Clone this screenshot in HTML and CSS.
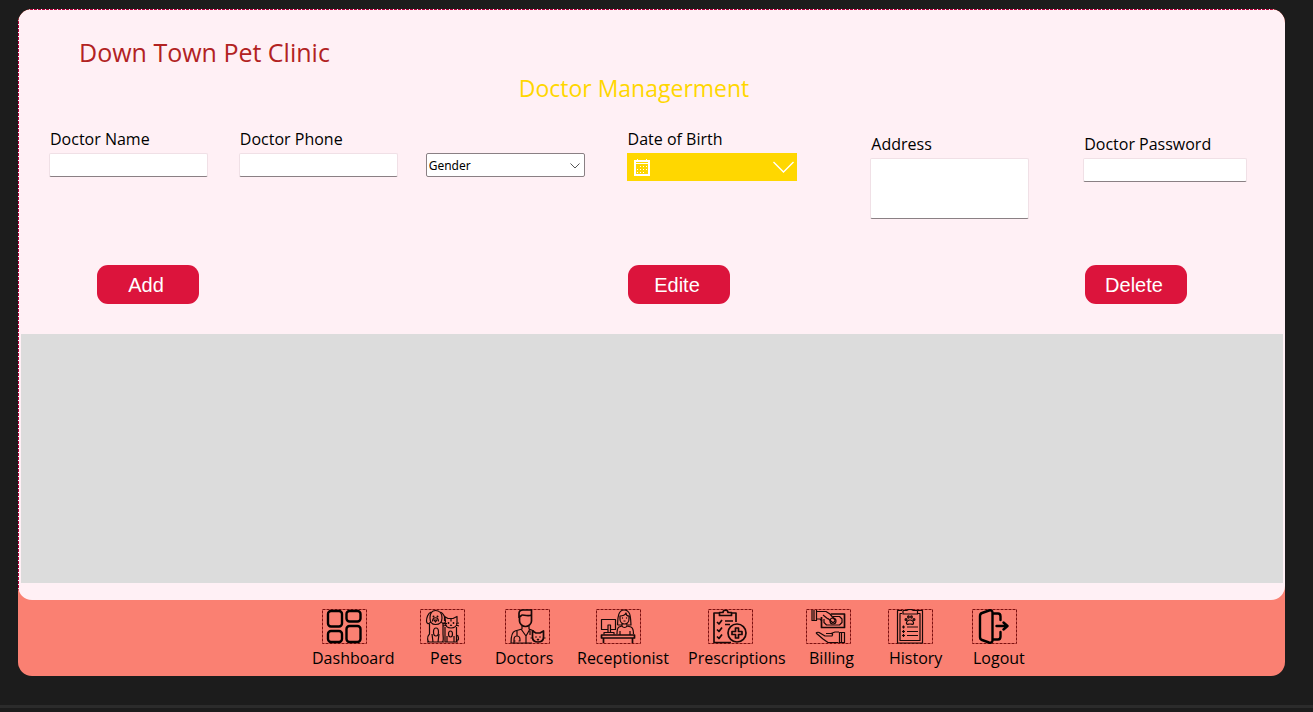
FILE: index.html
```html
<!DOCTYPE html>
<html lang="en">
<head>
<meta charset="utf-8">
<title>Down Town Pet Clinic</title>
<meta name="viewport" content="width=device-width, initial-scale=1">
<link rel="stylesheet" href="styles.css">
</head>
<body>
<div class="window">
  <main class="panel">
    <h1 class="title">Down Town Pet Clinic</h1>
    <h2 class="subtitle">Doctor Managerment</h2>
    <form class="form">
      <div class="fields">
        <div class="field">
          <label for="name">Doctor Name</label>
          <input class="box" id="name" type="text">
        </div>
        <div class="field">
          <label for="phone">Doctor Phone</label>
          <input class="box" id="phone" type="tel">
        </div>
        <div class="field field-bare">
          <div class="select-wrap">
            <select class="select" id="gender" aria-label="Gender">
              <option>Gender</option>
              <option>Male</option>
              <option>Female</option>
            </select>
            <svg class="select-arrow" viewBox="0 0 10 6" aria-hidden="true"><path d="M.5.5 5 5 9.5.5"/></svg>
          </div>
        </div>
        <div class="field">
          <label for="birth">Date of Birth</label>
          <button class="date" id="birth" type="button">
            <svg class="date-icon" viewBox="0 0 16 17" aria-hidden="true">
              <path class="date-frame" d="M1 2h14v14H1z"/>
              <path class="date-bar" d="M1 4.500h14M3.500 0v3M12.500 0v3"/>
              <path class="date-dots" d="M6 7.500h8M3 10.500h10M3 13.500h8"/>
            </svg>
            <svg class="date-arrow" viewBox="0 0 21 12" aria-hidden="true"><path d="M.5 1 10.500 11 20.500 1"/></svg>
          </button>
        </div>
        <div class="field field-low">
          <label for="address">Address</label>
          <textarea class="box box-tall" id="address"></textarea>
        </div>
        <div class="field field-low">
          <label for="password">Doctor Password</label>
          <input class="box box-wide" id="password" type="password">
        </div>
      </div>
      <div class="actions">
        <button class="action" type="button">Add</button>
        <button class="action" type="button">Edite</button>
        <button class="action" type="button">Delete</button>
      </div>
    </form>
    <section class="records" aria-label="Doctors list"></section>
  </main>
  <nav class="nav">
    <div class="nav-icons">
      <a href="#dashboard" aria-label="Open dashboard">
        <svg class="icon icon-bold" viewBox="0 0 45 35"><rect class="frame" x=".5" y=".5" width="44" height="34"/>
          <rect x="6" y="2" width="14" height="15.500" rx="3"/><rect x="24.500" y="2" width="14" height="10.500" rx="3"/>
          <rect x="6" y="22" width="14" height="11" rx="3"/><rect x="24.500" y="17" width="14" height="16" rx="3"/></svg>
      </a>
      <a href="#pets" aria-label="Open pets">
        <svg class="icon" viewBox="0 0 45 35"><rect class="frame" x=".5" y=".5" width="44" height="34"/>
          <path d="M10 9C10 4 12 1.500 15.500 1.500S22 4 22 9c0 4-2.500 6.500-6.500 6.500S10 13 10 9zM11 3C8 4 6.500 9 6.500 12c0 3 2.500 3.500 4 1M20.500 3c3 1 5 6 5 9 0 3-2.500 3.500-4 1M12.500 12.500c0-5 6-5 6 0M14 11h3l-1.500 2z"/>
          <path d="M9.500 15v10c-3 3-2 8 0 8h12c2 0 2-2 1.500-8V15M12 25l1 8M19 25l-1 8M7 33h17"/><ellipse cx="16" cy="23" rx="2.500" ry="4"/>
          <path d="M24.500 12V7.500l3.500 2h5l4-2V14c0 3-2.500 5-6 5s-6-2-6-5M23 14l4 .500M23 17l4-1M39 14l-3 .500M39 17l-3-1M31 9.500v3M30 16l1 .500 1-.500"/>
          <path d="M25 18v15h11.500V18M27 27v6M34 27v6M36.500 31c3 1 2-3 1-5M25 33h13"/><ellipse cx="30.500" cy="25" rx="2" ry="3"/>
          <circle class="dot" cx="13.500" cy="7.500" r="1"/><circle class="dot" cx="17.500" cy="7.500" r="1"/><circle class="dot" cx="28.500" cy="14" r=".900"/><circle class="dot" cx="33.500" cy="14" r=".900"/></svg>
      </a>
      <a href="#doctors" aria-label="Open doctors">
        <svg class="icon" viewBox="0 0 45 35"><rect class="frame" x=".5" y=".5" width="44" height="34"/>
          <path class="strong" d="M14 9V4.500C14 2 16 1 18 1h8.500v8M14.500 8c1 0 1.500-2 3-2s6 1.500 9 0M14.500 8v4c0 3 3 5.500 6 5.500s6-2.500 6-5.500V8"/>
          <path d="M17 17v3l-7 2c-3 1-4 4-4 12M24 17v3l5 2M16 20l5 7 4-7M21 27v7M12 22v5M12 27c-3 0-3 2-3 5h1.500M12 27c3 0 3 2 3 5h-1.500M25 22v4M9 31v3M6 34h21"/>
          <path class="strong" d="M27.500 27v-5l3.500 2h4l3.500-2v6c0 3-2 5-5.500 5s-5.500-2-5.500-5z"/><path d="M32 30l1 1 1-1M25.500 29h2M38.500 29h2"/><circle class="dot" cx="31" cy="28" r=".800"/><circle class="dot" cx="35" cy="28" r=".800"/></svg>
      </a>
      <a href="#receptionist" aria-label="Open receptionist">
        <svg class="icon" viewBox="0 0 45 35"><rect class="frame" x=".5" y=".5" width="44" height="34"/>
          <path d="M12 20.500H5.500v-10h14v10H15M12 24v-8h2.500v8M8 25.500v-2h10v2"/>
          <path class="strong" d="M5.500 26h33v3h-33zM7.500 29v5M36.500 29v5"/>
          <path d="M21.500 16C22 12 21 1 28 1s6.500 8 7 15h-3M21.500 16H26M24 7c3 0 5-1 6-3 0 2 1 3 3 3v3c0 3-2 5-4.500 5S24 13 24 10zM26 14.500V17l-3 1c-2 1-2 3-2 7M31 14.500V17l4 1c2 1 2.500 3 2.500 7M26 17c1 2 4 2 5 0M24 22v4M34 22v4M27.500 12h2"/><circle class="dot" cx="26.500" cy="9" r=".700"/><circle class="dot" cx="30.500" cy="9" r=".700"/></svg>
      </a>
      <a href="#prescriptions" aria-label="Open prescriptions">
        <svg class="icon" viewBox="0 0 45 35"><rect class="frame" x=".5" y=".5" width="44" height="34"/>
          <path class="strong" d="M11 4H6v29.500h17M23.500 4h4.500v9M11.500 6.500V3.500H15c0-3 5-3 5 0h3.500v3zM9 13l2 2 3-4M9 20.500l2 2 3-4M9 27.500l2 2 3-4M17 12h8M17 15.500h5"/>
          <circle class="strong" cx="29" cy="24" r="9"/><path class="strong" d="M27.500 19h3v3.500H34v3h-3.500V29h-3v-3.500H24v-3h3.500z"/></svg>
      </a>
      <a href="#billing" aria-label="Open billing">
        <svg class="icon" viewBox="0 0 45 35"><rect class="frame" x=".5" y=".5" width="44" height="34"/>
          <path d="M6 1v10.500h4.500V1M8 1v10M10.500 2.500H20l4 2.500 5 6c0 2-2 3-3 2l-4-3.500M10.500 10H14l2 2M17 6l5 4"/>
          <path class="strong" d="M25 5h13.500v13.500h-23V8"/><path d="M27 7.500h6.500L36 10v3.500l-2.500 2.500h-13L18 13.500V10"/><circle cx="27" cy="12" r="3"/>
          <path d="M10 24l7 6 5 3.500h10.500M10 24c1-1 3-1 4 0l5 3h7c1.500-2 0-2.500-1-2.500h-5M25 24.500l4-1.500h4M33.500 23.500h5v10h-5zM35.500 24v9"/></svg>
      </a>
      <a href="#history" aria-label="Open history">
        <svg class="icon" viewBox="0 0 45 35"><rect class="frame" x=".5" y=".5" width="44" height="34"/>
          <path d="M14 1.500H9.500v32.500h25V1.500H30M14 4.500h-2v27h20v-27h-2M15 5V1.500h4C19 0 25 0 25 1.500h4.500V5zM19 18h11M19 22.500h11M19 26.500h11M15.500 16.500v3M14 18h3M15.500 21v3M14 22.500h3M15.500 25v3M14 26.500h3"/>
          <path d="M22 11c-2 0-4 2-3.500 3.500s2 .500 3.500.500 3 1 3.500-.500S24 11 22 11z"/><ellipse cx="20.500" cy="8" rx=".800" ry="1.200"/><ellipse cx="23.500" cy="8" rx=".800" ry="1.200"/><circle cx="18" cy="10.500" r=".900"/><circle cx="26" cy="10.500" r=".900"/></svg>
      </a>
      <a href="#logout" aria-label="Log out now">
        <svg class="icon icon-bold" viewBox="0 0 45 35"><rect class="frame" x=".5" y=".5" width="44" height="34"/>
          <path d="M10 4l7-2.500c2-.500 3.500 0 3.500 2v28c0 2-1.500 2.500-3.500 2L10 31c-1.500-.500-2-1-2-3V7c0-2 .500-2.500 2-3zM21 4.500h5c2 0 2.500 1 2.500 3V11M21 30.500h5c2 0 2.500-1 2.500-3V23M24.500 17H35M31.500 13.500 35.500 17l-4 3.500"/></svg>
      </a>
    </div>
    <div class="nav-labels">
      <a href="#dashboard">Dashboard</a>
      <a href="#pets">Pets</a>
      <a href="#doctors">Doctors</a>
      <a href="#receptionist">Receptionist</a>
      <a href="#prescriptions">Prescriptions</a>
      <a href="#billing">Billing</a>
      <a href="#history">History</a>
      <a href="#logout">Logout</a>
    </div>
  </nav>
</div>
<div class="edge"></div>
</body>
</html>
```
FILE: styles.css
```css
* { box-sizing: border-box; }

body {
  margin: 0;
  min-height: 100vh;
  display: flex;
  flex-direction: column;
  background: #1c1c1c;
  color: #000;
  font-family: Tahoma, "Open Sans", "Noto Sans", sans-serif;
  font-size: 16px;
  line-height: 20px;
}

.window {
  margin: 9px 28px 0 18px;
  border-radius: 14px;
  overflow: hidden;
  background: #fa8072;
}

/* Designer-style dashed lines on the top and left edges */
.panel {
  padding: 1px 2px 17px 3px;
  border-radius: 14px;
  background:
    repeating-linear-gradient(90deg, #b0003a 0 3px, #fff 3px 4px) top / 100% 1px no-repeat,
    repeating-linear-gradient(180deg, #b0003a 0 3px, #fff 3px 4px) left / 1px 100% no-repeat,
    #fff0f5;
}

.title, .subtitle { margin: 0; font-weight: 400; }

.title {
  padding: 26px 0 0 58px;
  font-size: 25px;
  line-height: 32px;
  color: #b22222;
}

.subtitle {
  padding: 4px 36px 0 0;
  font-size: 23px;
  line-height: 32px;
  text-align: center;
  color: #ffd700;
}

.fields {
  display: grid;
  grid-template-columns: 190fr 187fr 201fr 244fr 213fr 200fr;
  padding: 25px 0 0 28px;
  height: 161px;
}

.field { display: flex; flex-direction: column; align-items: flex-start; gap: 4px; }
.field label { padding-left: 1px; }
.field-low { padding-top: 5px; }
.field-bare { padding-top: 24px; }

.box {
  width: 159px;
  height: 24px;
  margin: 0;
  padding: 2px 4px;
  border: 1px solid #f0e0e6;
  border-bottom-color: #8a8084;
  border-radius: 2px;
  background: #fff;
  font: inherit;
  resize: none;
}
.box-tall { height: 61px; }
.box-wide { width: 164px; }

.select-wrap { position: relative; width: 159px; }
.select {
  display: block;
  width: 100%;
  height: 24px;
  padding: 0 20px 0 2px;
  border: 1px solid #8a8084;
  border-radius: 2px;
  background: #fff;
  color: #000;
  appearance: none;
  font-family: "Noto Sans", sans-serif;
  font-size: 12px;
}
.select-arrow {
  position: absolute;
  right: 5px;
  top: 10px;
  width: 10px;
  height: 6px;
  fill: none;
  stroke: #555;
  pointer-events: none;
}

.date {
  display: flex;
  justify-content: space-between;
  align-items: center;
  width: 170px;
  height: 28px;
  padding: 0 3px 0 7px;
  border: 0;
  background: #ffd700;
}
.date svg { fill: none; stroke: #fff; }
.date-icon { width: 16px; height: 17px; }
.date-frame { stroke-width: 2; }
.date-dots { stroke-dasharray: 1 2; }
.date-arrow { width: 21px; height: 12px; }
.date-arrow path { stroke-width: 1.4; }

.actions {
  display: grid;
  grid-template-columns: 531fr 457fr 198fr;
  padding: 0 0 30px 76px;
}
.action {
  width: 102px;
  height: 39px;
  padding: 2px 4px 0 0;
  border: 0;
  border-radius: 11px;
  background: #dc143c;
  color: #fff;
  font-family: "Liberation Sans", Arial, sans-serif;
  font-size: 20px;
}

.records { height: 249px; background: #dcdcdc; }

.nav { height: 76px; padding-top: 9px; }
.nav a { color: #000; text-decoration: none; }

.nav-icons, .nav-labels { display: grid; }
.nav-icons {
  grid-template-columns: 304fr 98px 85px 91px 112px 98px 82px 84px 45px 268fr;
}
.nav-labels {
  grid-template-columns: 294fr 118px 65px 82px 111px 121px 80px 84px 50px 262fr;
  padding-top: 4px;
}
.nav-icons a:first-child, .nav-labels a:first-child { grid-column-start: 2; }

.icon {
  display: block;
  width: 45px;
  height: 35px;
  fill: none;
  stroke: #180808;
  stroke-width: 1.2;
  stroke-linejoin: round;
}
.icon .frame { stroke: #7d1010; stroke-width: 1; stroke-dasharray: 3 1; stroke-linejoin: miter; }
.icon .strong { stroke-width: 1.7; }
.icon .dot { fill: #180808; stroke: none; }
.icon-bold { stroke: #000; stroke-width: 2.4; stroke-linecap: round; }
.icon-bold .frame { stroke-linecap: butt; }

.edge {
  height: 3px;
  margin: auto 0 4px;
  background: #2b2b2b;
}
```
